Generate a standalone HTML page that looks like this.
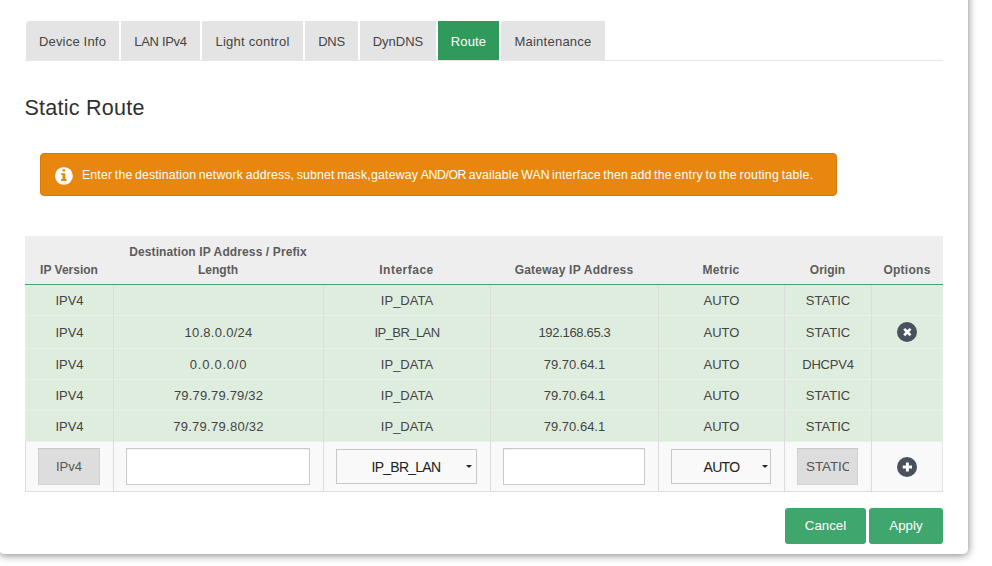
<!DOCTYPE html>
<html lang="en">
<head>
<meta charset="utf-8">
<title>Static Route</title>
<style>
*{box-sizing:border-box;}
html,body{margin:0;padding:0;width:992px;height:566px;overflow:hidden;background:#fff;}
body{font-family:"Liberation Sans",sans-serif;color:#444;position:relative;}
#panel{position:absolute;left:-1px;top:-20px;width:969px;height:574px;background:#fff;border-radius:0 0 5px 5px;box-shadow:0 1px 9px rgba(0,0,0,.52);}
/* tabs */
#tabs{position:absolute;left:25px;top:21px;width:918px;height:40px;border-bottom:1px solid #e7e7e7;}
#tabs a{position:absolute;top:0;height:39px;background:#e4e4e4;color:#444;font-size:13px;line-height:39px;text-align:center;text-decoration:none;white-space:nowrap;padding-top:1px;}
#tabs a.active{background:#2f9a5c;color:#fff;}
#tabs a:first-child{border-top-left-radius:4px;}
h1{position:absolute;left:24.5px;top:93.6px;margin:0;font-size:21.5px;font-weight:400;color:#303030;line-height:28px;white-space:nowrap;letter-spacing:.26px;}
/* alert */
#alert{position:absolute;left:40px;top:153px;width:797px;height:43px;background:#e8870e;border:1px solid #d87a08;border-radius:4px;color:#fff;font-size:12.3px;}
#alert svg{position:absolute;left:13.9px;top:12.9px;}
#alert span{position:absolute;left:41px;top:0;line-height:42px;white-space:nowrap;word-spacing:-1px;letter-spacing:.165px;}
#alert b{font-weight:400;letter-spacing:-.4px;}
#alert b.w{letter-spacing:0;}
#alert u{text-decoration:none;}
/* table */
table{position:absolute;left:25px;top:236px;width:918px;border-collapse:separate;border-spacing:0;table-layout:fixed;font-size:13px;}
th{height:49px;background:#eeeeee;border-bottom:1px solid #3ea66b;font-size:12px;font-weight:700;color:#5c5c5c;line-height:18px;vertical-align:bottom;padding:0 2px 5px;text-align:center;}
td{height:31px;background:#dfeddf;border-bottom:1px solid #ebefeb;border-left:1px solid #dcdcdc;text-align:center;padding:2px 0 0;color:#444;vertical-align:middle;line-height:16px;}
td:first-child{border-left:1px solid #e4efe4;}
td:last-child{border-right:1px solid #e6ece6;}
tr.r2 td{height:33px;}
tr.in td{height:50px;padding:0;background:#f9f9f9;border-bottom:1px solid #dddddd;}
tr.in td:first-child{border-left:1px solid #dddddd;}
tr.in td:last-child{border-right:1px solid #e4e4e4;}
.fld{display:block;height:37px;border:1px solid #c9c9c9;background:#fff;margin:0 0 0 12px;box-shadow:inset 0 1px 1px rgba(0,0,0,.06);}
.fld.dis{background:#dddddd;border-color:#c9c9c9 #d1d1d1 #d1d1d1 #d1d1d1;color:#555;line-height:35px;overflow:hidden;white-space:nowrap;box-shadow:none;}
.sel{display:block;position:relative;height:35px;border:1px solid #c8c8c8;background:#f9f9f9;margin:0 0 0 12px;color:#222;font-size:14px;line-height:33px;}
.sel i{position:absolute;right:5px;top:15px;width:0;height:0;border-left:3px solid transparent;border-right:3px solid transparent;border-top:3px solid #222;}
.ic{display:inline-block;vertical-align:middle;}
/* buttons */
.btn{position:absolute;top:508px;height:36px;background:#3fa66d;border-radius:3px;color:#fff;font-size:13.3px;line-height:36px;text-align:center;}
</style>
</head>
<body>
<div id="panel"></div>

<div id="tabs">
  <a style="left:1px;width:93px;letter-spacing:.2px">Device Info</a>
  <a style="left:96px;width:79px;letter-spacing:-.32px">LAN IPv4</a>
  <a style="left:177px;width:101px;letter-spacing:.25px">Light control</a>
  <a style="left:280px;width:53px;letter-spacing:-.3px">DNS</a>
  <a style="left:335px;width:76px">DynDNS</a>
  <a class="active" style="left:413px;width:61px;letter-spacing:.15px">Route</a>
  <a style="left:476px;width:104px;letter-spacing:.25px">Maintenance</a>
</div>

<h1>Static Route</h1>

<div id="alert">
  <svg width="17.8" height="17.8" viewBox="0 0 18 18"><circle cx="9" cy="9" r="9" fill="#fff"/><rect x="7.5" y="2.4" width="2.95" height="2.1" fill="#e8870e"/><path d="M6.2 6.3H10.45V12.2H11.7V14.2H6.1V12.2H7.6V8H6.2z" fill="#e8870e"/></svg>
  <span>Enter the destination network address, subnet mask, <u style="margin-left:-2.3px">gateway</u> <b>AND/OR</b> available <b class="w">WAN</b> interface then add the <u style="letter-spacing:.26px">entry to the routing table.</u></span>
</div>

<table>
  <colgroup><col style="width:88px"><col style="width:210px"><col style="width:167px"><col style="width:168px"><col style="width:126px"><col style="width:87px"><col style="width:72px"></colgroup>
  <thead>
    <tr><th>IP Version</th><th><span style="letter-spacing:.115px">Destination IP Address / Prefix</span><br>Length</th><th style="letter-spacing:.5px">Interface</th><th style="letter-spacing:.22px">Gateway IP Address</th><th style="letter-spacing:.3px">Metric</th><th>Origin</th><th style="letter-spacing:.27px">Options</th></tr>
  </thead>
  <tbody>
    <tr><td style="letter-spacing:-.1px">IPV4</td><td></td><td>IP_DATA</td><td></td><td>AUTO</td><td>STATIC</td><td></td></tr>
    <tr class="r2"><td style="letter-spacing:-.1px">IPV4</td><td style="letter-spacing:.28px">10.8.0.0/24</td><td style="letter-spacing:-.57px">IP_BR_LAN</td><td style="letter-spacing:-.32px">192.168.65.3</td><td>AUTO</td><td>STATIC</td><td style="padding-top:0"><svg class="ic" width="20" height="20" viewBox="0 0 20 20"><circle cx="10" cy="10" r="10" fill="#49515e"/><path d="M7.2 6.9l6.3 6.3M13.5 6.9l-6.3 6.3" stroke="#fff" stroke-width="2.7"/></svg></td></tr>
    <tr><td style="letter-spacing:-.1px">IPV4</td><td style="letter-spacing:.76px">0.0.0.0/0</td><td>IP_DATA</td><td>79.70.64.1</td><td>AUTO</td><td style="letter-spacing:-.2px">DHCPV4</td><td></td></tr>
    <tr><td style="letter-spacing:-.1px">IPV4</td><td style="letter-spacing:.165px">79.79.79.79/32</td><td>IP_DATA</td><td>79.70.64.1</td><td>AUTO</td><td>STATIC</td><td></td></tr>
    <tr><td style="letter-spacing:-.1px">IPV4</td><td style="letter-spacing:.28px">79.79.79.80/32</td><td>IP_DATA</td><td>79.70.64.1</td><td>AUTO</td><td>STATIC</td><td></td></tr>
    <tr class="in">
      <td><span class="fld dis" style="width:62px">IPv4</span></td>
      <td><span class="fld" style="width:184px"></span></td>
      <td><span class="sel" style="width:141px"><span style="position:absolute;left:34.5px;top:1px;letter-spacing:-.74px">IP_BR_LAN</span><i style="right:4.5px"></i></span></td>
      <td><span class="fld" style="width:142px"></span></td>
      <td><span class="sel" style="width:100px"><span style="position:absolute;left:31.5px;top:1px;letter-spacing:-.7px">AUTO</span><i style="right:2.5px"></i></span></td>
      <td><span class="fld dis" style="width:61px;text-align:left;padding-left:8px;font-size:13.5px"><span style="display:block;width:43px;overflow:hidden;letter-spacing:-.1px">STATIC</span></span></td>
      <td><svg class="ic" width="20" height="20" viewBox="0 0 20 20"><circle cx="10" cy="10" r="10" fill="#49515e"/><path d="M10.4 5.4v9.2M5.8 10h9.2" stroke="#fff" stroke-width="2.9"/></svg></td>
    </tr>
  </tbody>
</table>

<div class="btn" style="left:785px;width:81px">Cancel</div>
<div class="btn" style="left:869px;width:74px">Apply</div>
</body>
</html>
